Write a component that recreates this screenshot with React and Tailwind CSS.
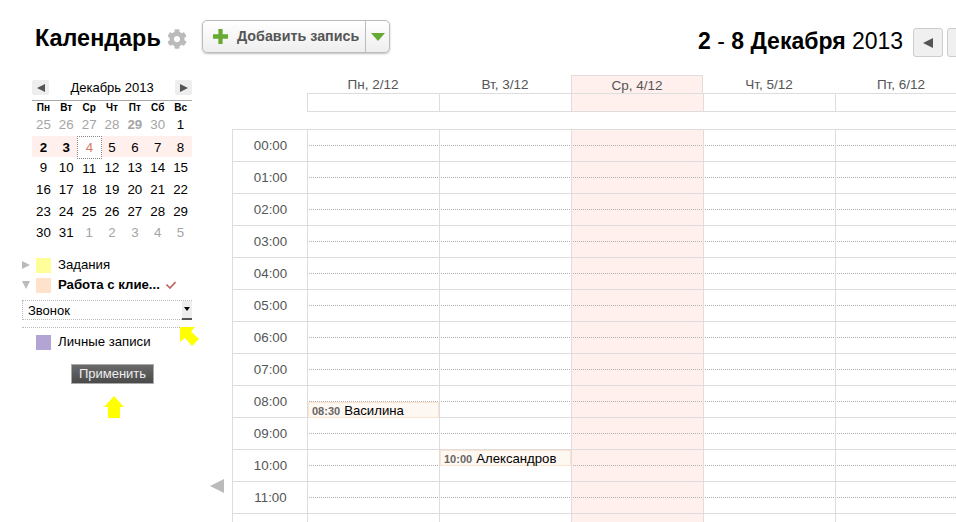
import { FaCog } from 'react-icons/fa';

const WEEKDAYS = ['Пн', 'Вт', 'Ср', 'Чт', 'Пт', 'Сб', 'Вс'];
const MONTH_ROWS = [
  [25, 26, 27, 28, 29, 30, 1],
  [2, 3, 4, 5, 6, 7, 8],
  [9, 10, 11, 12, 13, 14, 15],
  [16, 17, 18, 19, 20, 21, 22],
  [23, 24, 25, 26, 27, 28, 29],
  [30, 31, 1, 2, 3, 4, 5],
];
const DAYS = [
  { label: 'Пн, 2/12' },
  { label: 'Вт, 3/12' },
  { label: 'Ср, 4/12', today: true },
  { label: 'Чт, 5/12', afterToday: true },
  { label: 'Пт, 6/12' },
  { label: 'Сб, 7/12' },
];
const HOURS = Array.from({ length: 13 }, (_, i) => `${String(i).padStart(2, '0')}:00`);

function Triangle({ dir = 'left', className = '' }) {
  const points = {
    left: '10,0 10,10 0,5',
    right: '0,0 0,10 10,5',
    down: '0,0 10,0 5,10',
  };
  return (
    <svg viewBox="0 0 10 10" preserveAspectRatio="none" className={className} fill="currentColor">
      <polygon points={points[dir]} />
    </svg>
  );
}

function MiniCalendar() {
  return (
    <div className="ml-[32px] w-[160px]">
      <div className="flex items-center justify-between h-[15px] pt-[5px] pb-[5px] border-b border-[#aaa] box-content">
        <button className="w-[17px] h-[15px] rounded-[2px] bg-[#eee] flex items-center justify-center text-[#555]">
          <Triangle dir="left" className="w-[8px] h-[8px]" />
        </button>
        <span className="text-[13px] pt-px text-black">Декабрь 2013</span>
        <button className="w-[17px] h-[15px] rounded-[2px] bg-[#eee] flex items-center justify-center text-[#555]">
          <Triangle dir="right" className="w-[8px] h-[8px]" />
        </button>
      </div>
      <div className="grid grid-cols-7 h-[13px] items-center">
        {WEEKDAYS.map((d) => (
          <span key={d} className="text-center text-[10px] font-bold leading-[13px] text-black">{d}</span>
        ))}
      </div>
      {MONTH_ROWS.map((row, r) => (
        <div key={r} className={`grid grid-cols-7 h-[21.6px] items-center ${r === 1 ? 'bg-[#ffefed]' : ''}`}>
          {row.map((n, c) => {
            const outside = (r === 0 && c < 6) || (r === 5 && c > 1);
            const isToday = r === 1 && c === 2;
            const bold = (r === 1 && c < 2) || (r === 0 && c === 4);
            return (
              <span
                key={c}
                className={`text-center text-[13.33px] leading-[15px] ${outside ? 'text-[#a5a5a5]' : 'text-black'} ${bold ? 'font-bold' : ''} ${
                  isToday ? 'h-[23px] -ml-[0.5px] -mr-[1px] leading-[22px] border border-dotted border-[#888] !text-[#d9756c] bg-white' : ''
                } ${r === 2 && c === 2 ? 'pt-[2px]' : ''}`}
              >
                {n}
              </span>
            );
          })}
        </div>
      ))}
    </div>
  );
}

function CategoryRow({ color, label, bold, arrow, check, className = '' }) {
  return (
    <div className={`flex items-center h-[15px] pl-[22px] ${className}`}>
      <span className="w-[14px] shrink-0 text-[#bbb]">
        {arrow && <Triangle dir={arrow} className="w-[8px] h-[8px]" />}
      </span>
      <span className={`w-[15px] h-[15px] shrink-0 ${color}`} />
      <span className={`ml-[7px] text-[13.2px] text-black whitespace-nowrap ${bold ? 'font-bold' : ''}`}>{label}</span>
      {check && (
        <svg viewBox="0 0 10 8" className="ml-[6px] w-[10px] h-[8px]" fill="none" stroke="#c0605c" strokeWidth="1.6">
          <path d="M0.5 3.5 L4 7 L9.5 1" />
        </svg>
      )}
    </div>
  );
}

function Sidebar() {
  return (
    <aside className="relative w-[232px] shrink-0">
      <MiniCalendar />
      <div className="mt-[14px]">
        <CategoryRow color="bg-[#ffff99]" label="Задания" arrow="right" />
        <CategoryRow color="bg-[#ffe2cc]" label="Работа с клие..." bold arrow="down" check className="mt-[5px]" />
        <div className="relative ml-[22px] w-[170px] mt-[7px] h-[28px] border-b border-dotted border-[#bbb]">
          <div className="flex items-center h-[20px] border border-dotted border-[#bbb] pl-[5px] pt-[2px] text-[13px] text-black">Звонок</div>
          <div className="absolute right-0 top-[1px] w-[10px] h-[19px] bg-[#eee] border-b-2 border-[#555] flex items-center justify-center">
            <Triangle dir="down" className="w-[6px] h-[4px] text-black" />
          </div>
        </div>
        <CategoryRow color="bg-[#b3a5d3]" label="Личные записи" className="mt-[7px]" />
        <button className="block ml-[71px] mt-[14px] w-[83px] h-[20px] border border-[#aaa] bg-gradient-to-b from-[#6a6a6a] to-[#4a4a4a] text-[13px] leading-[17px] text-[#eee]">
          Применить
        </button>
        <svg viewBox="0 0 20 22" className="ml-[104px] mt-[12px] w-[20px] h-[22px]" fill="#ffff00">
          <polygon points="10,0 20,11 16,11 16,22 4,22 4,11 0,11" />
        </svg>
      </div>
      <svg viewBox="0 0 20 20" className="absolute left-[180px] top-[252px] w-[20px] h-[20px]" fill="#ffff00">
        <polygon points="0,0 15,0 11,4.5 19,12 12,19 5,11 0,15" />
      </svg>
      <Triangle dir="left" className="absolute left-[210px] top-[404px] w-[14px] h-[14px] text-[#bbb]" />
    </aside>
  );
}

function EventChip({ time, name, top }) {
  return (
    <div
      className="absolute left-0 right-0 h-[16px] bg-[#fef8f3] border border-[#fde3cd] flex items-center pl-[3px] pt-[2px] whitespace-nowrap z-10"
      style={{ top }}
    >
      <span className="text-[11px] font-bold text-[#666] mr-[4px]">{time}</span>
      <span className="text-[13.2px] text-black">{name}</span>
    </div>
  );
}

function DayColumn({ day, events = [] }) {
  const leftBorder = day.today || day.afterToday ? 'border-[#e4dcda]' : 'border-[#ddd]';
  return (
    <div className={`relative w-[132px] shrink-0 border-l ${leftBorder} ${day.today ? 'bg-[#ffefed]' : ''}`}>
      {HOURS.map((h) => (
        <div key={h} className="h-[32px] border-b border-[#ddd]">
          <div className="h-[16px] mx-px border-b border-dotted border-[#b0b0b0]" />
        </div>
      ))}
      {events.map((e) => (
        <EventChip key={e.name} {...e} />
      ))}
    </div>
  );
}

function WeekGrid() {
  return (
    <main className="flex-1 min-w-0 overflow-hidden">
      <div className="flex pl-[75px]">
        {DAYS.map((d) => (
          <div key={d.label} className="w-[132px] shrink-0">
            <div className={`h-[18px] text-center text-[13.5px] leading-[19px] text-[#555] ${d.today ? 'bg-[#ffefed] border-x border-t border-[#e4dcda]' : ''}`}>
              {d.label}
            </div>
            <div className={`h-[19px] border-t border-b border-l ${d.today ? 'bg-[#ffefed] border-[#ddd] border-l-[#e4dcda]' : d.afterToday ? 'border-[#ddd] border-l-[#e4dcda]' : 'border-[#ddd]'}`} />
          </div>
        ))}
      </div>
      <div className="flex mt-[17px] border-t border-[#ddd]">
        <div className="w-[75px] shrink-0 border-l border-[#ddd]">
          {HOURS.map((h) => (
            <div key={h} className="h-[32px] border-b border-[#ddd] flex items-center justify-center pl-[1px] text-[13.33px] text-[#555]">
              {h}
            </div>
          ))}
        </div>
        {DAYS.map((d, i) => (
          <DayColumn
            key={d.label}
            day={d}
            events={
              i === 0
                ? [{ time: '08:30', name: 'Василина', top: 272 }]
                : i === 1
                  ? [{ time: '10:00', name: 'Александров', top: 320 }]
                  : []
            }
          />
        ))}
      </div>
    </main>
  );
}

export default function App() {
  return (
    <div className="w-[956px] h-[522px] overflow-hidden bg-white font-['Liberation_Sans',Arial,sans-serif]">
      <header className="flex h-[75px] pl-[35px] pt-[20px] w-[1100px]">
        <h1 className="w-[125px] shrink-0 text-[23.4px] font-bold leading-[36px] text-black whitespace-nowrap">Календарь</h1>
        <FaCog className="ml-[7px] mt-[9px] w-[20px] h-[20px] shrink-0 text-[#bbb]" />
        <div className="ml-[15px] flex shrink-0 h-[33px] w-[188px] rounded-[5px] border border-[#bbb] bg-gradient-to-b from-white to-[#eee] shadow-[0_1px_2px_rgba(0,0,0,0.25)]">
          <button className="flex items-center flex-1 pl-[10px] text-[#555] text-[14.3px] font-bold whitespace-nowrap">
            <svg viewBox="0 0 14 14" className="w-[15px] h-[15px] shrink-0" fill="#66aa33">
              <path d="M5 0h4v5h5v4H9v5H5V9H0V5h5z" />
            </svg>
            <span className="ml-[9px]">Добавить запись</span>
          </button>
          <button className="w-[24px] shrink-0 border-l border-[#bbb] flex items-center justify-center">
            <Triangle dir="down" className="w-[14px] h-[8px] text-[#66aa33]" />
          </button>
        </div>
        <div className="ml-[308px] w-[204px] shrink-0 text-[23px] leading-[43px] whitespace-nowrap text-black">
          <b>2</b> - <b>8 Декабря</b> 2013
        </div>
        <div className="ml-[11px] mt-[8px] flex shrink-0 gap-[4px]">
          <button className="w-[30px] h-[29px] rounded-[3px] border border-[#ccc] bg-[#f0f0f0] flex items-center justify-center text-[#555]">
            <Triangle dir="left" className="w-[10px] h-[10px]" />
          </button>
          <button className="w-[30px] h-[29px] rounded-[3px] border border-[#ccc] bg-[#f0f0f0]" />
        </div>
      </header>
      <div className="flex h-[447px]">
        <Sidebar />
        <WeekGrid />
      </div>
    </div>
  );
}
